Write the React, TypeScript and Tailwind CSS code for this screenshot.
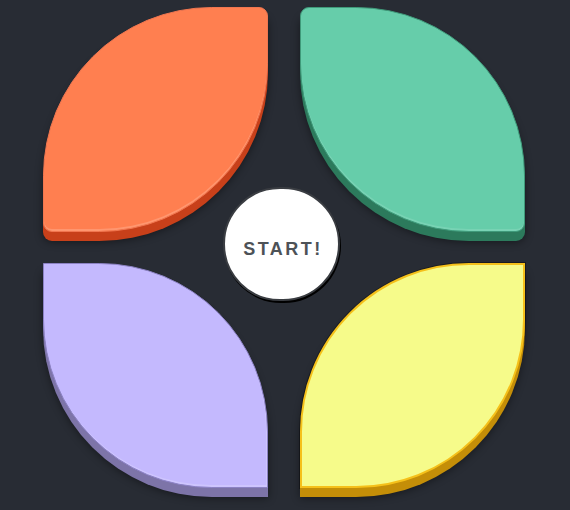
import React from "react";

export default function App() {
  return (
    <div className="min-h-screen w-full bg-[#282c34] relative" style={{ fontFamily: '"Liberation Sans", Arial, sans-serif' }}>
      <div className="grid grid-cols-[225px_225px] gap-x-[32px] gap-y-[31px] pl-[43px] pt-[7px]">
        <div className="w-[225px] h-[225px] bg-[#ff7f50] border border-[#f07650] rounded-[75%_9px] shadow-[inset_0_-2px_0_rgba(255,255,255,0.18),0_9px_0_#c8401a,0_10px_8px_rgba(0,0,0,0.45)]" />
        <div className="w-[225px] h-[225px] bg-[#66cdaa] border border-[#3f9a7a] rounded-[9px_75%] shadow-[inset_0_-2px_0_rgba(255,255,255,0.12),0_9px_0_#2c7a5c,0_10px_8px_rgba(0,0,0,0.45)]" />
        <div className="w-[225px] h-[225px] bg-[#c4b9fe] border border-[#8c82c4] rounded-[0_75%] shadow-[inset_-1px_-2px_0_rgba(255,255,255,0.18),0_9px_0_#7d74a8,0_10px_8px_rgba(0,0,0,0.45)]" />
        <div className="w-[225px] h-[225px] bg-[#f6fb8a] border-2 border-[#f5c01a] rounded-[75%_0] shadow-[0_9px_0_#c48e08,0_0_0_1px_rgba(0,0,0,0.35),0_10px_8px_rgba(0,0,0,0.45)]" />
      </div>
      <div className="absolute left-[223px] top-[187px] w-[117px] h-[114px] rounded-full bg-white border-2 border-[#3a3d42] shadow-[1px_2px_0_#000] flex items-center justify-center">
        <span className="text-[18px] leading-none font-bold tracking-[2.5px] text-[#4d5257] pl-[3px] mt-[9px]">START!</span>
      </div>
    </div>
  );
}
